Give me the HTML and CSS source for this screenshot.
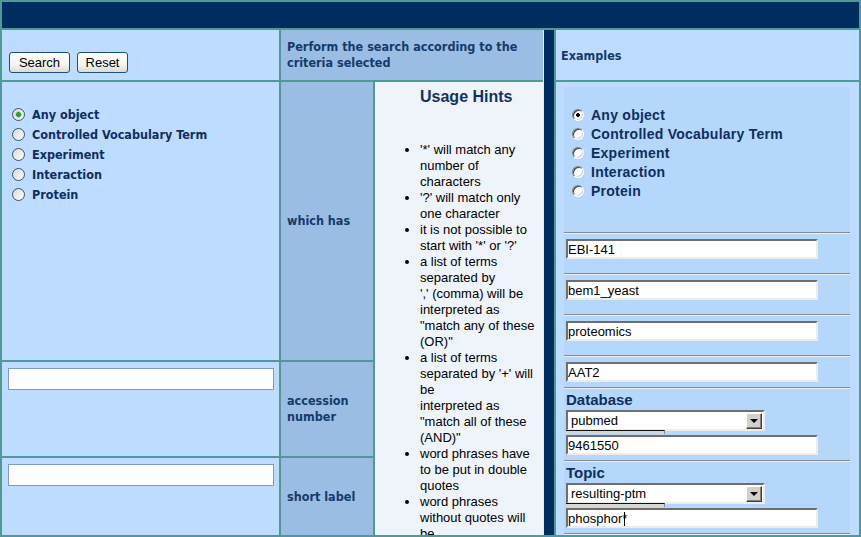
FILE: index.html
```html
<!DOCTYPE html>
<html>
<head>
<meta charset="utf-8">
<title>Search</title>
<link rel="stylesheet" href="styles.css">
</head>
<body>
<div class="page">
  <div class="topbar"></div>
  <div class="main">
    <form class="search">
      <div class="cell actions">
        <button type="button" class="btn btn-search">Search</button>
        <button type="reset" class="btn btn-reset">Reset</button>
      </div>
      <div class="cell head">Perform the search according to the<br>criteria selected</div>
      <div class="cell types">
        <label class="opt"><input type="radio" name="type" class="xp" checked>Any object</label>
        <label class="opt"><input type="radio" name="type" class="xp">Controlled Vocabulary Term</label>
        <label class="opt"><input type="radio" name="type" class="xp">Experiment</label>
        <label class="opt"><input type="radio" name="type" class="xp">Interaction</label>
        <label class="opt"><input type="radio" name="type" class="xp">Protein</label>
      </div>
      <div class="cell label">which has</div>
      <div class="cell hints">
        <h3>Usage Hints</h3>
        <ul>
          <li>'*' will match any<br>number of<br>characters</li>
          <li>'?' will match only<br>one character</li>
          <li>it is not possible to<br>start with '*' or '?'</li>
          <li>a list of terms<br>separated by<br>',' (comma) will be<br>interpreted as<br>"match any of these<br>(OR)"</li>
          <li>a list of terms<br>separated by '+' will<br>be<br>interpreted as<br>"match all of these<br>(AND)"</li>
          <li>word phrases have<br>to be put in double<br>quotes</li>
          <li>word phrases<br>without quotes will<br>be</li>
        </ul>
      </div>
      <div class="cell field"><input type="text" class="xp-text"></div>
      <div class="cell label">accession<br>number</div>
      <div class="cell field"><input type="text" class="xp-text"></div>
      <div class="cell label">short label</div>
    </form>
    <div class="divider"></div>
    <div class="examples">
      <div class="ex-head">Examples</div>
      <div class="ex-body">
        <div class="ex-panel">
          <div class="ex-types">
            <label class="ex-opt"><input type="radio" name="ex" class="classic" checked>Any object</label>
            <label class="ex-opt"><input type="radio" name="ex" class="classic">Controlled Vocabulary Term</label>
            <label class="ex-opt"><input type="radio" name="ex" class="classic">Experiment</label>
            <label class="ex-opt"><input type="radio" name="ex" class="classic">Interaction</label>
            <label class="ex-opt"><input type="radio" name="ex" class="classic">Protein</label>
          </div>
          <hr class="sep">
          <input class="win" type="text" value="EBI-141">
          <hr class="sep">
          <input class="win" type="text" value="bem1_yeast">
          <hr class="sep">
          <input class="win" type="text" value="proteomics">
          <hr class="sep">
          <input class="win win-tight" type="text" value="AAT2">
          <hr class="sep">
          <div class="ex-label">Database</div>
          <div class="wsel"><select><option>pubmed</option></select><span class="wsel-btn"></span></div>
          <div class="stub"></div>
          <input class="win win-after" type="text" value="9461550">
          <hr class="sep">
          <div class="ex-label">Topic</div>
          <div class="wsel"><select><option>resulting-ptm</option></select><span class="wsel-btn"></span></div>
          <div class="stub"></div>
          <div class="caret-field"><input class="win win-after" type="text" value="phosphor*"></div>
          <hr class="sep">
        </div>
      </div>
    </div>
  </div>
</div>
</body>
</html>
```

FILE: styles.css
```css
* { box-sizing: border-box; }
html, body { margin: 0; padding: 0; }
body {
  width: 861px;
  height: 537px;
  overflow: hidden;
  background: #4f9a94;
  font-family: "DejaVu Sans Condensed", "DejaVu Sans", Tahoma, sans-serif;
  font-stretch: condensed;
}
.page {
  display: grid;
  grid-template-rows: 26px 505px;
  row-gap: 2px;
  padding: 2px;
  width: 861px;
  height: 537px;
  background: #4f9a94;
}
.topbar { background: #002d5f; }
.main { display: flex; height: 505px; }

/* search form grid */
.search {
  display: grid;
  grid-template-columns: 277px 92px 168px;
  grid-template-rows: 50px 278px 94px 77px;
  gap: 2px;
  width: 541px;
  margin: 0;
}
.cell { background: #bedcff; }
.actions {
  display: flex;
  align-items: flex-end;
  gap: 7px;
  padding: 0 0 7px 7px;
}
.btn {
  height: 21px;
  padding: 0;
  font: 13px "Liberation Sans", Arial, sans-serif;
  font-stretch: normal;
  color: #000;
  border: 1px solid #1c4f7e;
  border-radius: 3px;
  background: linear-gradient(#ffffff, #f4f4f0 60%, #dedbd0);
}
.btn-search { width: 61px; }
.btn-search + .btn-reset { width: 51px; }

.head {
  grid-column: 2 / 4;
  background: #9bbde3;
  display: flex;
  align-items: center;
  padding-left: 6px;
  font-weight: bold;
  font-size: 12.5px;
  line-height: 16px;
  color: #143a6c;
}
.label {
  background: #9bbde3;
  display: flex;
  align-items: center;
  padding-left: 6px;
  font-weight: bold;
  font-size: 12.5px;
  line-height: 16px;
  color: #143a6c;
}
.types {
  padding: 22px 0 0 5px;
  display: flex;
  flex-direction: column;
}
.opt {
  display: flex;
  align-items: center;
  height: 20px;
  font-weight: bold;
  font-size: 12.5px;
  color: #0e2e60;
}
.xp {
  appearance: none;
  -webkit-appearance: none;
  width: 13px;
  height: 13px;
  margin: 0 7px 0 5px;
  border: 1px solid #2f5376;
  border-radius: 50%;
  background: linear-gradient(135deg, #d8d8d2, #ffffff);
}
.xp:checked {
  background: radial-gradient(circle, #2f9a2f 0 2px, #74cd74 2.6px, rgba(255,255,255,0) 3.4px), linear-gradient(135deg, #d8d8d2, #ffffff);
}
.hints {
  grid-column: 3;
  grid-row: 2 / 5;
  background: #eef4fa;
  overflow: hidden;
}
.hints h3 {
  margin: 5px 0 0;
  padding-left: 45px;
  font: bold 16px/19px "Liberation Sans", Arial, sans-serif;
  font-stretch: normal;
  color: #0f3265;
}
.hints ul {
  margin: 36px 0 0;
  padding-left: 45px;
  font: 13px/16px "Liberation Sans", Arial, sans-serif;
  font-stretch: normal;
  color: #000;
  white-space: nowrap;
}
.field { padding: 6px 5px 0 6px; }
.xp-text {
  display: block;
  width: 100%;
  height: 22px;
  margin: 0;
  border: 1px solid #7f9db9;
  background: #fff;
}

/* divider */
.divider {
  width: 11px;
  background: #002d5f;
  border-left: 1px solid #e2ecf6;
  margin-right: 2px;
}

/* examples */
.examples {
  width: 303px;
  display: grid;
  grid-template-rows: 50px 453px;
  row-gap: 2px;
}
.ex-head {
  background: #bedcff;
  display: flex;
  align-items: center;
  padding-left: 5px;
  font-weight: bold;
  font-size: 12.5px;
  color: #143a6c;
}
.ex-body {
  background: #bedcff;
  padding: 5px 9px 0 8px;
  overflow: hidden;
}
.ex-panel {
  background: #b4d7fb;
  height: 100%;
  display: flex;
  flex-direction: column;
  align-items: flex-start;
}
.ex-types {
  height: 145px;
  padding: 18px 0 0 8px;
  display: flex;
  flex-direction: column;
}
.ex-opt {
  display: flex;
  align-items: center;
  height: 19px;
  font: bold 14px "Liberation Sans", Arial, sans-serif;
  font-stretch: normal;
  letter-spacing: 0.25px;
  color: #0e2e60;
}
.classic {
  appearance: none;
  -webkit-appearance: none;
  width: 12px;
  height: 12px;
  margin: 0 7px 0 0;
  border-radius: 50%;
  border: 1px solid;
  border-color: #808080 #ffffff #ffffff #808080;
  background: #fff;
  box-shadow: inset 1px 1px 0 #404040, inset -1px -1px 0 #d4d0c8;
}
.classic:checked {
  background: radial-gradient(circle, #000 0 1.6px, #fff 2.2px);
}
.sep {
  align-self: stretch;
  height: 2px;
  margin: 0;
  border: 0;
  border-top: 1px solid #8a8a8a;
  border-bottom: 1px solid #eeeeee;
}
.win {
  display: block;
  width: 252px;
  height: 20px;
  margin: 5px 0 14px 2px;
  padding: 0;
  border: 2px solid;
  border-color: #6e6e6e #ececec #ececec #6e6e6e;
  background: #fff;
  font: 13px "Liberation Sans", Arial, sans-serif;
  font-stretch: normal;
  color: #000;
}
.win-tight { margin-bottom: 5px; }
.win-after { margin: 1px 0 5px 2px; }
.ex-label {
  height: 21px;
  margin-left: 2px;
  font: bold 15px/21px "Liberation Sans", Arial, sans-serif;
  font-stretch: normal;
  color: #0e2e60;
}
.wsel {
  display: flex;
  align-items: center;
  width: 199px;
  height: 21px;
  margin-left: 2px;
  border: 2px solid;
  border-color: #6e6e6e #ececec #ececec #6e6e6e;
  background: #fff;
}
.wsel select {
  appearance: none;
  -webkit-appearance: none;
  flex: 1;
  height: 100%;
  border: 0;
  outline: 0;
  padding: 0 0 0 3px;
  margin: 0;
  background: transparent;
  font: 13px "Liberation Sans", Arial, sans-serif;
  font-stretch: normal;
  color: #000;
}
.wsel-btn {
  display: flex;
  align-items: center;
  justify-content: center;
  width: 16px;
  height: 16px;
  margin-right: 1px;
  background: #d4d0c8;
  border: 1px solid;
  border-color: #ffffff #404040 #404040 #ffffff;
  box-shadow: inset -1px -1px 0 #808080;
}
.wsel-btn::after {
  content: "";
  border-left: 4px solid transparent;
  border-right: 4px solid transparent;
  border-top: 4px solid #000;
  margin-top: 1px;
}
.stub {
  width: 99px;
  height: 4px;
  margin: -1px 0 0 2px;
  border-top: 1px solid #111;
  border-right: 1px solid #8a8a8a;
  background: #d8d6d0;
}
.caret-field { position: relative; }
.caret-field::after {
  content: "";
  position: absolute;
  left: 60px;
  top: 5px;
  width: 1px;
  height: 14px;
  background: #000;
}
```
